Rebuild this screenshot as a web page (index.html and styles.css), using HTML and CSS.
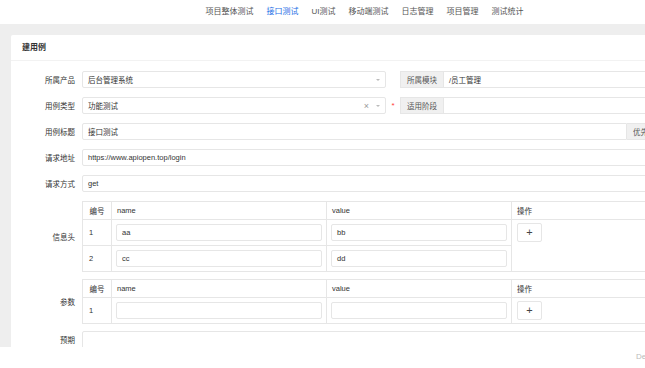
FILE: index.html
```html
<!DOCTYPE html>
<html lang="zh-CN">
<head>
<meta charset="utf-8">
<title>建用例</title>
<link rel="stylesheet" href="styles.css">
</head>
<body>
<div class="page">
  <header class="nav">
    <a class="nav-item">项目整体测试</a>
    <a class="nav-item active">接口测试</a>
    <a class="nav-item">UI测试</a>
    <a class="nav-item">移动端测试</a>
    <a class="nav-item">日志管理</a>
    <a class="nav-item">项目管理</a>
    <a class="nav-item">测试统计</a>
  </header>
  <main class="main">
    <section class="card">
      <div class="card-header">建用例</div>
      <div class="card-body">
        <div class="row">
          <label class="label">所属产品</label>
          <div class="select w-select"><span class="val">后台管理系统</span><span class="arrow"></span></div>
          <span class="req"></span>
          <span class="addon">所属模块</span>
          <div class="input w-side">/员工管理</div>
        </div>
        <div class="row">
          <label class="label">用例类型</label>
          <div class="select w-select"><span class="val">功能测试</span><span class="clear">×</span><span class="arrow"></span></div>
          <span class="req">*</span>
          <span class="addon">适用阶段</span>
          <div class="input w-side"></div>
        </div>
        <div class="row">
          <label class="label">用例标题</label>
          <div class="input w-title">接口测试</div>
          <span class="addon">优先级</span>
          <div class="input w-side"></div>
        </div>
        <div class="row">
          <label class="label">请求地址</label>
          <div class="input grow">https://www.apiopen.top/login</div>
        </div>
        <div class="row">
          <label class="label">请求方式</label>
          <div class="input grow">get</div>
        </div>
        <div class="row row-table">
          <label class="label">信息头</label>
          <table class="kv">
            <colgroup><col class="c-no"><col class="c-name"><col class="c-value"><col></colgroup>
            <thead><tr><th>编号</th><th>name</th><th>value</th><th>操作</th></tr></thead>
            <tbody>
              <tr><td class="no">1</td><td><div class="input">aa</div></td><td><div class="input">bb</div></td><td class="op" rowspan="2"><button class="btn-add">+</button></td></tr>
              <tr><td class="no">2</td><td><div class="input">cc</div></td><td><div class="input">dd</div></td></tr>
            </tbody>
          </table>
        </div>
        <div class="row row-table">
          <label class="label">参数</label>
          <table class="kv">
            <colgroup><col class="c-no"><col class="c-name"><col class="c-value"><col></colgroup>
            <thead><tr><th>编号</th><th>name</th><th>value</th><th>操作</th></tr></thead>
            <tbody>
              <tr><td class="no">1</td><td><div class="input"></div></td><td><div class="input"></div></td><td class="op"><button class="btn-add">+</button></td></tr>
            </tbody>
          </table>
        </div>
        <div class="row row-tall">
          <label class="label">预期</label>
          <div class="input grow tall"></div>
        </div>
      </div>
    </section>
  </main>
  <footer class="footer">Designed by</footer>
</div>
</body>
</html>
```
FILE: styles.css
```css
* { box-sizing: border-box; }
html, body { margin: 0; padding: 0; }
body {
  font-family: "Liberation Sans", "Noto Sans CJK SC", sans-serif;
  font-size: 7.5px;
  color: #333;
  background: #fff;
  overflow: hidden;
}
.page { width: 645px; height: 368px; overflow: hidden; display: flex; flex-direction: column; }

.nav {
  height: 24px;
  flex: none;
  display: flex;
  align-items: center;
  padding-left: 199px;
  background: #fff;
  white-space: nowrap;
}
.nav-item { font-size: 8px; color: #555; padding: 0 6.5px; line-height: 24px; }
.nav-item.active { color: #1e6fe6; }

.main {
  height: 323px;
  flex: none;
  background: #eeeeee;
  padding: 11px 0 0 11px;
  overflow: hidden;
}
.card { width: 790px; background: #fff; border-radius: 2px 0 0 0; min-height: 400px; }
.card-header {
  height: 26px;
  line-height: 26px;
  padding-left: 11px;
  font-size: 8px;
  font-weight: 700;
  color: #333;
  border-bottom: 1px solid #f2f2f2;
}
.card-body { padding: 10px 20px 0 0; }

.row { display: flex; align-items: center; height: 17px; margin-bottom: 9px; }
.row-table { height: auto; margin-bottom: 7px; }
.label {
  flex: none;
  width: 71px;
  padding-right: 7px;
  text-align: right;
  color: #333;
  font-size: 7.5px;
}

.input, .select {
  height: 17px;
  border: 1px solid #e6e6e6;
  border-radius: 2px;
  background: #fff;
  padding: 0 5px;
  display: flex;
  align-items: center;
  color: #333;
  white-space: nowrap;
  overflow: hidden;
}
.grow { flex: 1; }
.w-select { width: 304px; flex: none; }
.w-title { width: 545px; flex: none; border-radius: 2px 0 0 2px; }
.w-side { flex: 1; border-left: none; border-radius: 0 2px 2px 0; }

.select .val { flex: 1; }
.clear { color: #999; font-size: 9px; margin-right: 7px; }
.arrow {
  width: 0; height: 0;
  border-left: 2px solid transparent;
  border-right: 2px solid transparent;
  border-top: 2px solid #bbb;
  margin-right: 0;
}

.req { flex: none; width: 14px; text-align: center; color: #ff3b3b; font-size: 8px; }
.addon {
  flex: none;
  height: 17px;
  padding: 0 6px;
  display: flex;
  align-items: center;
  background: #f0f0f0;
  border: 1px solid #e6e6e6;
  color: #555;
  white-space: nowrap;
}
.w-title + .addon { border-left: none; }

.kv {
  border-collapse: collapse;
  table-layout: fixed;
  width: 679px;
  flex: none;
}
.c-no { width: 29px; }
.c-name { width: 215px; }
.c-value { width: 185px; }
.kv th, .kv td { border: 1px solid #e6e6e6; padding: 0 4px; text-align: left; font-weight: normal; }
.kv th { height: 18px; padding: 0 5px; color: #333; }
.kv th:first-child { text-align: center; }
.kv td { height: 26px; }
.kv td.no { padding-left: 6px; vertical-align: middle; }
.kv td.op { vertical-align: top; padding: 3px 5px; }
.btn-add {
  width: 25px;
  height: 19px;
  border: 1px solid #e6e6e6;
  background: #fff;
  border-radius: 2px;
  padding: 0;
  font-family: "Liberation Sans", sans-serif;
  font-size: 11px;
  line-height: 15px;
  color: #444;
}

.row-tall { align-items: flex-start; height: 40px; }
.row-tall .label { padding-top: 3px; }
.tall { height: 40px; }

.footer {
  flex: 1;
  background: #fff;
  padding-left: 636px;
  padding-top: 5px;
  font-size: 8px;
  color: #bbb;
  white-space: nowrap;
  overflow: hidden;
}
```
